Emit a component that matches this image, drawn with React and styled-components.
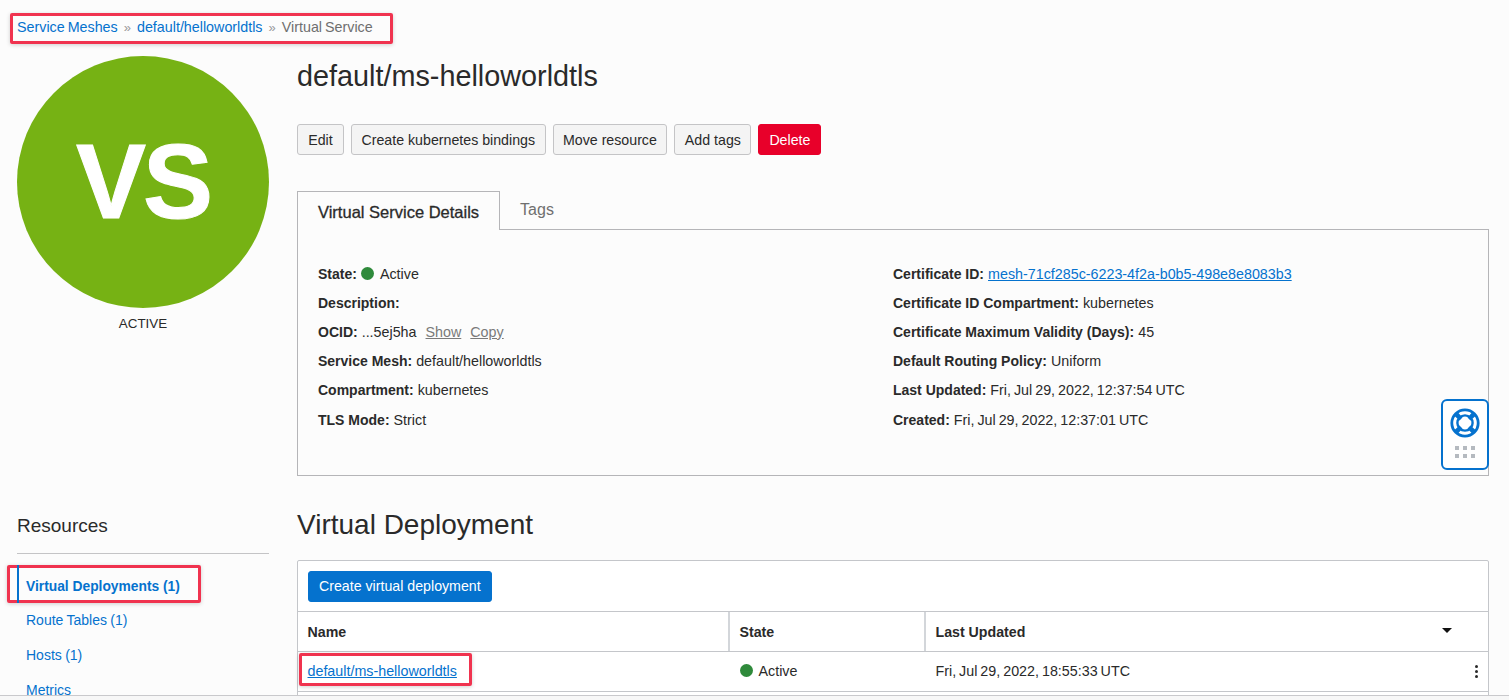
import React from "react";
import styled, { createGlobalStyle } from "styled-components";

const GlobalStyle = createGlobalStyle`
  html, body {
    margin: 0;
    padding: 0;
    height: 100%;
    overflow: hidden;
    background: #f7f7f7;
  }
  body {
    font-family: "Liberation Sans", Arial, sans-serif;
    font-size: 14.3px;
    color: #2a2a2a;
  }
`;

const LEFT_DETAILS = [
  { label: "Description:" },
  { label: "OCID:", value: "...5ej5ha", actions: ["Show", "Copy"] },
  { label: "Service Mesh:", value: "default/helloworldtls" },
  { label: "Compartment:", value: "kubernetes" },
  { label: "TLS Mode:", value: "Strict" },
];

const RIGHT_DETAILS = [
  { label: "Certificate ID Compartment:", value: "kubernetes" },
  { label: "Certificate Maximum Validity (Days):", value: "45" },
  { label: "Default Routing Policy:", value: "Uniform" },
  { label: "Last Updated:", value: "Fri, Jul 29, 2022, 12:37:54 UTC" },
  { label: "Created:", value: "Fri, Jul 29, 2022, 12:37:01 UTC" },
];

const HelpIcon = () => (
  <svg width="30" height="30" viewBox="0 0 30 30" fill="none">
    <circle cx="15" cy="15" r="13.2" stroke="#0572ce" strokeWidth="2.8" />
    <circle cx="15" cy="15" r="7.6" stroke="#0572ce" strokeWidth="2.4" />
    <path
      d="M4.5 8 L8 4.5 L12.5 9.5 L9.5 12.5 Z M22 4.5 L25.5 8 L20.5 12.5 L17.5 9.5 Z M25.5 22 L22 25.5 L17.5 20.5 L20.5 17.5 Z M8 25.5 L4.5 22 L9.5 17.5 L12.5 20.5 Z"
      fill="#0572ce"
    />
  </svg>
);

const DetailRow = ({ label, value, actions }) => (
  <Row>
    <Label>{label}</Label>
    {value && <Value>{value}</Value>}
    {actions && actions.map((action) => <MutedLink key={action}>{action}</MutedLink>)}
  </Row>
);

const App = () => (
  <Screen>
    <GlobalStyle />
    <Page>
      <Breadcrumbs>
        <Crumb>Service Meshes</Crumb>
        <Separator>»</Separator>
        <Crumb>default/helloworldtls</Crumb>
        <Separator>»</Separator>
        <CurrentCrumb>Virtual Service</CurrentCrumb>
      </Breadcrumbs>
      <Columns>
        <Sidebar>
          <Avatar>VS</Avatar>
          <AvatarState>ACTIVE</AvatarState>
          <ResourcesTitle>Resources</ResourcesTitle>
          <ResourceList>
            <ActiveResource>Virtual Deployments (1)</ActiveResource>
            <ResourceItem>Route Tables (1)</ResourceItem>
            <ResourceItem>Hosts (1)</ResourceItem>
            <ResourceItem>Metrics</ResourceItem>
          </ResourceList>
        </Sidebar>
        <Content>
          <PageTitle>default/ms-helloworldtls</PageTitle>
          <Actions>
            <Button>Edit</Button>
            <Button>Create kubernetes bindings</Button>
            <Button>Move resource</Button>
            <Button>Add tags</Button>
            <DangerButton>Delete</DangerButton>
          </Actions>
          <Tabs>
            <ActiveTab>Virtual Service Details</ActiveTab>
            <Tab>Tags</Tab>
          </Tabs>
          <DetailsPanel>
            <DetailColumn>
              <Row>
                <Label>State:</Label>
                <StatusDot />
                <span>Active</span>
              </Row>
              {LEFT_DETAILS.map((item) => (
                <DetailRow key={item.label} {...item} />
              ))}
            </DetailColumn>
            <DetailColumn>
              <Row>
                <Label>Certificate ID:</Label>
                <TextLink>mesh-71cf285c-6223-4f2a-b0b5-498e8e8083b3</TextLink>
              </Row>
              {RIGHT_DETAILS.map((item) => (
                <DetailRow key={item.label} {...item} />
              ))}
            </DetailColumn>
            <HelpWidget>
              <HelpIcon />
              <Dots>
                {[0, 1, 2, 3, 4, 5].map((dot) => (
                  <Dot key={dot} />
                ))}
              </Dots>
            </HelpWidget>
          </DetailsPanel>
          <SectionTitle>Virtual Deployment</SectionTitle>
          <TablePanel>
            <Toolbar>
              <PrimaryButton>Create virtual deployment</PrimaryButton>
            </Toolbar>
            <TableHead>
              <HeadCell $divided>Name</HeadCell>
              <HeadCell $divided>State</HeadCell>
              <HeadCell>
                Last Updated
                <SortArrow />
              </HeadCell>
            </TableHead>
            <TableRow>
              <Cell>
                <HighlightedLink>
                  <TextLink>default/ms-helloworldtls</TextLink>
                </HighlightedLink>
              </Cell>
              <Cell>
                <StatusDot />
                <span>Active</span>
              </Cell>
              <Cell>
                <Value>Fri, Jul 29, 2022, 18:55:33 UTC</Value>
                <Kebab>
                  <i />
                  <i />
                  <i />
                </Kebab>
              </Cell>
            </TableRow>
          </TablePanel>
        </Content>
      </Columns>
    </Page>
  </Screen>
);

const Screen = styled.div`
  height: 700px;
  overflow: hidden;
  background: #f7f7f7;
`;

const Page = styled.div`
  height: 696px;
  overflow: hidden;
  box-sizing: border-box;
  background: #fcfcfc;
  border-bottom: 1px solid #c9c9cc;
  padding: 13px 20px 0 17px;
`;

const Breadcrumbs = styled.nav`
  display: flex;
  align-items: center;
  height: 31px;
  width: 383px;
  box-sizing: border-box;
  margin-left: -7px;
  padding: 0 0 3px 4px;
  white-space: nowrap;
  word-spacing: -1px;
  border: 3px solid #f0334f;
  border-radius: 2px;
  box-shadow: 0 1px 4px rgba(0, 0, 0, 0.18);
`;

const Crumb = styled.a`
  color: #0572ce;
`;

const CurrentCrumb = styled.span`
  color: #6f6f6f;
`;

const Separator = styled.span`
  color: #9a9a9a;
  font-size: 13px;
  margin: 0 6px;
`;

const Columns = styled.div`
  display: flex;
  margin-top: 12px;
`;

const Sidebar = styled.aside`
  width: 252px;
  flex: none;
  margin-right: 28px;
`;

const Avatar = styled.div`
  width: 252px;
  height: 252px;
  border-radius: 50%;
  background: #76b214;
  color: #fff;
  display: flex;
  align-items: center;
  justify-content: center;
  font-size: 105px;
  font-weight: 700;
  letter-spacing: -3px;
  -webkit-text-stroke: 1px #fff;
`;

const AvatarState = styled.div`
  text-align: center;
  font-size: 13.4px;
  line-height: 16px;
  margin-top: 8px;
`;

const ResourcesTitle = styled.h3`
  margin: 180px 0 0;
  font-size: 19px;
  line-height: 28px;
  font-weight: 400;
  padding-bottom: 13px;
  border-bottom: 1px solid #c4c4c6;
`;

const ResourceList = styled.ul`
  list-style: none;
  margin: 11px 0 0;
  padding: 0;
`;

const ResourceItem = styled.li`
  color: #0572ce;
  font-size: 14px;
  word-spacing: -0.5px;
  line-height: 35px;
  padding-left: 9px;
`;

const ActiveResource = styled(ResourceItem)`
  position: relative;
  margin: 0 0 0 -10px;
  width: 194px;
  height: 38px;
  box-sizing: border-box;
  font-size: 13.8px;
  word-spacing: 0;
  font-weight: 700;
  line-height: 37px;
  padding-left: 16px;
  border: 3px solid #f0334f;
  border-radius: 2px;
  box-shadow: 0 1px 4px rgba(0, 0, 0, 0.18);

  &::before {
    content: "";
    position: absolute;
    left: 7px;
    top: -3px;
    bottom: -3px;
    width: 2px;
    background: #0572ce;
  }
`;

const Content = styled.main`
  flex: 1;
  min-width: 0;
`;

const PageTitle = styled.h1`
  margin: 2px 0 0;
  font-size: 28.8px;
  line-height: 36px;
  font-weight: 400;
`;

const Actions = styled.div`
  display: flex;
  gap: 7px;
  margin-top: 30px;
`;

const Button = styled.button`
  height: 31px;
  min-width: 47px;
  padding: 0 9.5px;
  font: inherit;
  font-size: 14.2px;
  color: #2a2a2a;
  background: #f4f4f4;
  border: 1px solid #c4c4c6;
  border-radius: 3px;
`;

const DangerButton = styled(Button)`
  background: #e8002a;
  border-color: #e8002a;
  color: #fff;
  padding: 0 10px;
`;

const PrimaryButton = styled(Button)`
  background: #0572ce;
  border-color: #0572ce;
  color: #fff;
  padding: 0 10px;
`;

const Tabs = styled.div`
  display: flex;
  margin-top: 36px;
  height: 39px;
`;

const Tab = styled.div`
  padding: 0 20px;
  font-size: 16px;
  line-height: 38px;
  color: #6f6f6f;
  flex: 0 0 auto;
`;

const ActiveTab = styled(Tab)`
  color: #2a2a2a;
  font-size: 16.5px;
  line-height: 40px;
  -webkit-text-stroke: 0.3px #2a2a2a;
  background: #fcfcfc;
  border: 1px solid #b5b5b8;
  border-bottom: none;
  position: relative;
  z-index: 1;
`;

const DetailsPanel = styled.section`
  position: relative;
  display: grid;
  grid-template-columns: 575px 1fr;
  height: 247px;
  box-sizing: border-box;
  margin-top: -1px;
  padding: 29px 20px 0;
  border: 1px solid #b5b5b8;
`;

const DetailColumn = styled.div`
  display: flex;
  flex-direction: column;
`;

const Row = styled.div`
  display: flex;
  align-items: center;
  gap: 4px;
  height: 29.2px;
  white-space: pre;
`;

const Label = styled.span`
  font-size: 14px;
  font-weight: 700;
`;

const Value = styled.span`
  word-spacing: -1px;
`;

const StatusDot = styled.span`
  display: inline-block;
  width: 13px;
  height: 13px;
  margin-right: 2px;
  border-radius: 50%;
  background: #2f8a3b;
`;

const MutedLink = styled.a`
  color: #7a7a7a;
  text-decoration: underline;
  margin-left: 5px;
`;

const TextLink = styled.a`
  color: #0572ce;
  text-decoration: underline;
`;

const HelpWidget = styled.div`
  position: absolute;
  right: -1px;
  top: 169px;
  width: 48px;
  height: 71px;
  box-sizing: border-box;
  background: #fff;
  border: 2px solid #0572ce;
  border-radius: 6px;
  display: flex;
  flex-direction: column;
  align-items: center;
  padding-top: 7px;
`;

const Dots = styled.div`
  display: grid;
  grid-template-columns: repeat(3, 4px);
  gap: 4px;
  margin-top: 8px;
`;

const Dot = styled.span`
  width: 4px;
  height: 4px;
  background: #b5bac0;
`;

const SectionTitle = styled.h2`
  margin: 29px 0 0;
  font-size: 28px;
  line-height: 40px;
  font-weight: 400;
`;

const TablePanel = styled.section`
  height: 150px;
  margin-top: 15px;
  background: #fff;
  border: 1px solid #c4c6ca;
  border-radius: 2px 2px 0 0;
`;

const Toolbar = styled.div`
  display: flex;
  align-items: center;
  height: 50px;
  padding-left: 10px;
  border-bottom: 1px solid #c4c6ca;
`;

const TableHead = styled.div`
  display: grid;
  grid-template-columns: 432px 196px 1fr;
  height: 39px;
  border-bottom: 1px solid #c4c6ca;
`;

const TableRow = styled(TableHead)`
  & > div {
    padding-bottom: 2px;
  }
`;

const Cell = styled.div`
  position: relative;
  display: flex;
  align-items: center;
  padding-left: 9.5px;
  gap: 4px;
`;

const HeadCell = styled(Cell)`
  font-size: 14.2px;
  font-weight: 700;
  border-right: ${(props) => (props.$divided ? "2px solid #d3d6da" : "none")};
`;

const SortArrow = styled.span`
  position: absolute;
  right: 36px;
  top: 16px;
  border-left: 5px solid transparent;
  border-right: 5px solid transparent;
  border-top: 5px solid #111;
`;

const Kebab = styled.span`
  position: absolute;
  right: 10px;
  top: 13px;
  display: flex;
  flex-direction: column;
  gap: 2px;

  i {
    width: 3px;
    height: 3px;
    border-radius: 50%;
    background: #2a2a2a;
  }
`;

const HighlightedLink = styled.span`
  display: flex;
  align-items: center;
  box-sizing: border-box;
  width: 173px;
  height: 33px;
  margin: -2px 0 0 -8.5px;
  padding: 3px 0 0 5.5px;
  border: 3px solid #f0334f;
  border-radius: 2px;
  box-shadow: 0 1px 4px rgba(0, 0, 0, 0.18);
`;

export default App;
